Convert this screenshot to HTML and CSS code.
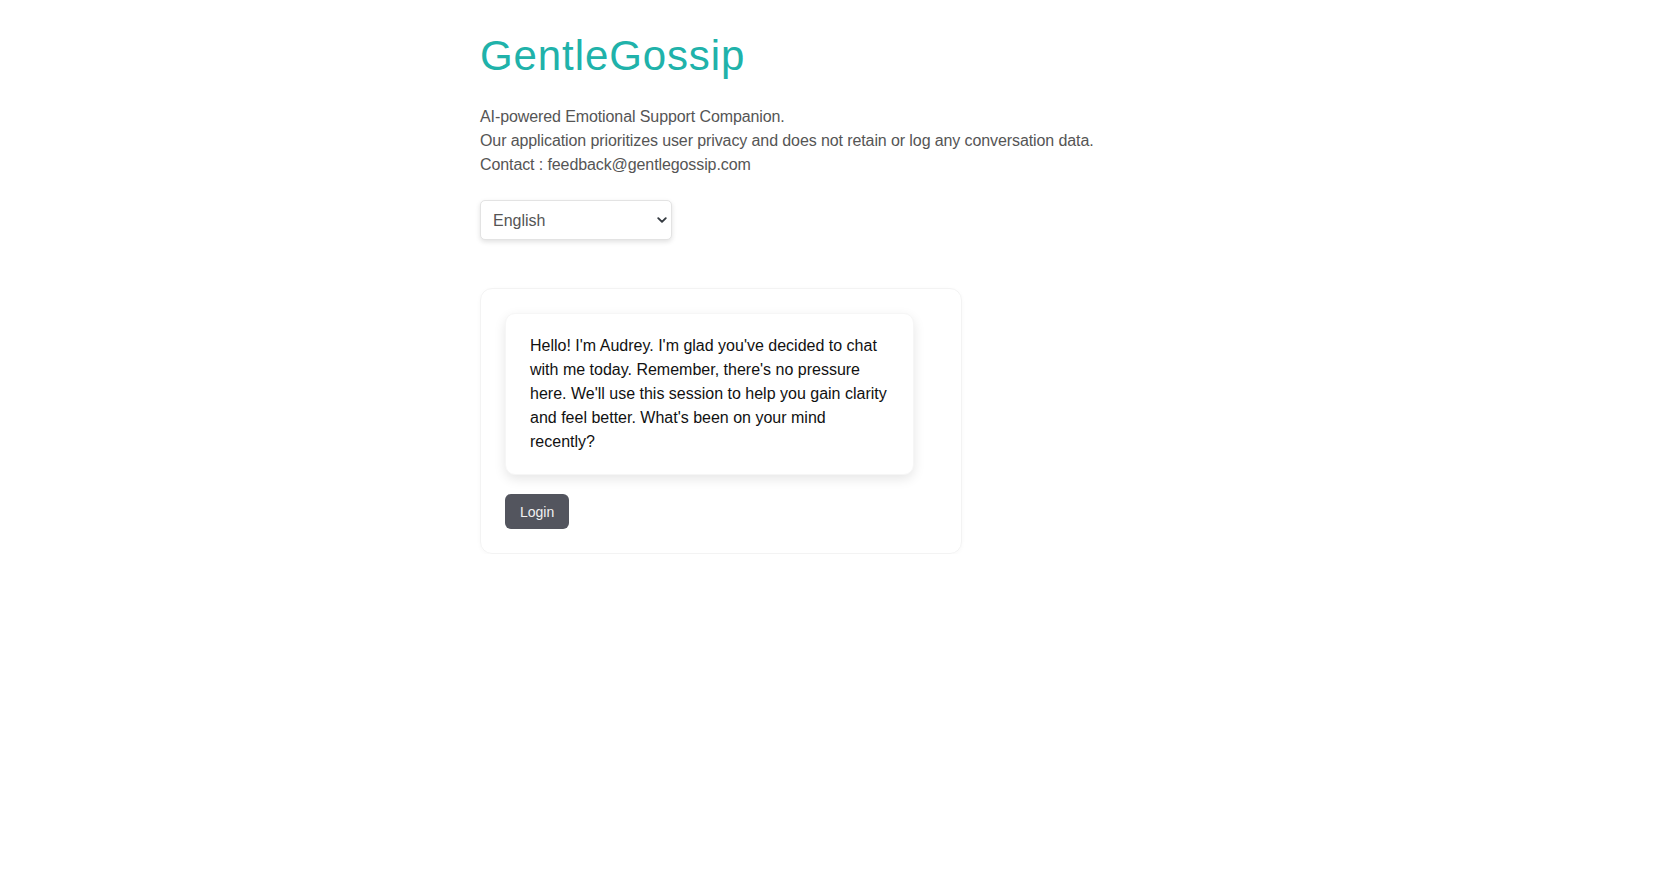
FILE: index.html
```html
<!DOCTYPE html>
<html>
<head>
    <meta charset="utf-8" />
    <meta name="viewport" content="width=device-width" />
    <title>GentleGossip</title>
    <link rel="stylesheet" href="styles.css">
</head>
<body>
    <div class="container">
        <h1 class="brand">GentleGossip</h1>

        <div class="intro">
            <p>AI-powered Emotional Support Companion.</p>
            <p>Our application prioritizes user privacy and does not retain or log any conversation data.</p>
            <p>Contact : feedback@gentlegossip.com</p>
        </div>

        <div class="lang-wrap">
            <select class="lang">
                <option>English</option>
            </select>
            <svg class="chevron" width="10" height="10" viewBox="0 0 16 16">
                <path d="M2 5l6 6 6-6" fill="none" stroke="#343a40" stroke-width="3" stroke-linecap="round" stroke-linejoin="round" />
            </svg>
        </div>

        <div class="chat-card">
            <div class="bubble">
                Hello! I'm Audrey. I'm glad you've decided to chat with me today. Remember, there's no pressure here. We'll use this session to help you gain clarity and feel better. What's been on your mind recently?
            </div>
            <button class="btn-login">Login</button>
        </div>
    </div>
</body>
</html>
```

FILE: styles.css
```css
body {
  margin: 0;
  background: #fff;
  font-family: "Liberation Sans", Arial, sans-serif;
  font-size: 16px;
  line-height: 1.5;
  color: #212529;
}

.container {
  width: 720px;
  margin: 0 auto;
  padding-top: 31px;
}

.brand {
  margin: 0 0 24px;
  font-size: 42px;
  font-weight: 400;
  line-height: 1.2;
  letter-spacing: 0.9px;
  color: #20b2aa;
}

.intro {
  color: #555;
  margin-bottom: 23px;
  letter-spacing: -0.1px;
}

.intro p {
  margin: 0;
}

.lang-wrap {
  position: relative;
  width: 192px;
}

.lang {
  display: block;
  width: 192px;
  height: 40px;
  padding: 0 30px 0 12px;
  font-family: inherit;
  font-size: 16px;
  color: #555;
  background: #fff;
  border: 1px solid #e3e3e3;
  border-radius: 5px;
  box-shadow: 0 2px 5px rgba(0, 0, 0, 0.12);
  appearance: none;
  -webkit-appearance: none;
  outline: none;
}

.chevron {
  position: absolute;
  right: 5px;
  top: 15px;
  pointer-events: none;
}

.chat-card {
  margin-top: 48px;
  width: 432px;
  padding: 24px;
  border: 1px solid #f3f3f3;
  border-radius: 12px;
  box-shadow: 0 1px 4px rgba(0, 0, 0, 0.03);
}

.bubble {
  width: 359px;
  padding: 20px 24px;
  background: #fff;
  border: 1px solid #f6f6f6;
  border-radius: 10px;
  box-shadow: 0 4px 12px rgba(0, 0, 0, 0.1);
  color: #111;
}

.btn-login {
  display: block;
  margin-top: 19px;
  height: 35px;
  padding: 0 15px;
  font-family: inherit;
  font-size: 14px;
  color: #f1f1f1;
  background: #53555e;
  border: none;
  border-radius: 6px;
}
```
